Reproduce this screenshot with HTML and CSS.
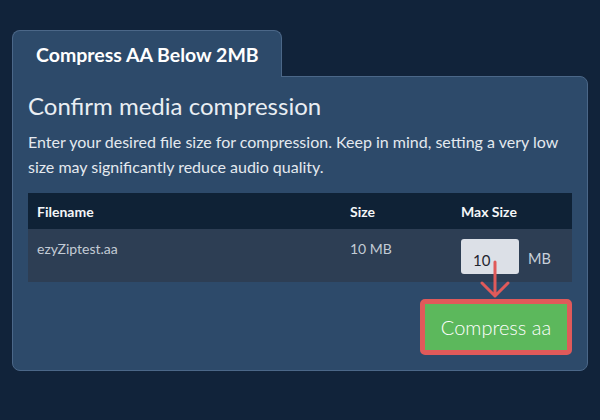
FILE: index.html
```html
<!DOCTYPE html>
<html lang="en">
<head>
<meta charset="utf-8">
<title>Compress AA Below 2MB</title>
<link rel="stylesheet" href="styles.css">
</head>
<body>
<div class="wrap">
  <div class="tab">Compress AA Below 2MB</div>
  <section class="panel">
    <h1 class="title">Confirm media compression</h1>
    <p class="desc">Enter your desired file size for compression. Keep in mind, setting a very low size may significantly reduce audio quality.</p>
    <table class="files">
      <thead>
        <tr>
          <th class="c-name">Filename</th>
          <th class="c-size">Size</th>
          <th class="c-max">Max Size</th>
        </tr>
      </thead>
      <tbody>
        <tr>
          <td>ezyZiptest.aa</td>
          <td>10 MB</td>
          <td><input class="max-input" type="text" value="10"><span class="unit">MB</span></td>
        </tr>
      </tbody>
    </table>
    <div class="actions">
      <svg class="arrow" width="50" height="40" viewBox="0 0 50 40" aria-hidden="true">
        <path d="M25 3 V37 M12 24 L25 37 L38 24" fill="none" stroke="#e05a5a" stroke-width="3" stroke-linecap="round" stroke-linejoin="round"/>
      </svg>
      <button class="btn" type="button">Compress aa</button>
    </div>
  </section>
</div>
</body>
</html>
```

FILE: styles.css
```css
html, body {
  margin: 0;
  padding: 0;
  background: #11233a;
  font-family: Lato, "Open Sans", sans-serif;
  color: #e8edf2;
}

.wrap {
  padding: 30px 12px 0 12px;
}

.tab {
  display: inline-block;
  box-sizing: border-box;
  width: 270px;
  height: 47px;
  padding: 0 0 0 23px;
  white-space: nowrap;
  overflow: hidden;
  line-height: 47px;
  font-size: 19.5px;
  font-weight: 700;
  color: #ffffff;
  background: #2d4a6a;
  border: 1px solid #4b6788;
  border-bottom: none;
  border-radius: 8px 8px 0 0;
  position: relative;
  z-index: 1;
  margin-bottom: -1px;
  vertical-align: top;
}

.panel {
  display: block;
  background: #2d4a6a;
  border: 1px solid #4b6788;
  border-radius: 0 8px 8px 8px;
  padding: 14px 15px 15px 15px;
}

.title {
  margin: 0;
  font-size: 24px;
  line-height: 30px;
  font-weight: 400;
  color: #e9eef3;
}

.desc {
  margin: 8px 0 0 0;
  font-size: 16px;
  line-height: 25px;
  color: #e4e9ef;
}

.files {
  margin-top: 14px;
  width: 544px;
  border-collapse: collapse;
  table-layout: fixed;
}

.files th {
  background: #0f2236;
  color: #f4f6f8;
  font-size: 14px;
  font-weight: 700;
  text-align: left;
  height: 36px;
  padding: 0 9px;
  box-sizing: border-box;
}

.c-name { width: 313px; }
.c-size { width: 111px; }

.files td {
  background: #2d3e54;
  color: #c3cbd5;
  font-size: 14px;
  line-height: 20px;
  vertical-align: top;
  padding: 10px 9px 8px 9px;
}

.max-input {
  box-sizing: border-box;
  width: 58px;
  height: 35px;
  border: none;
  border-radius: 3px;
  background: #dce0e7;
  color: #1e2530;
  font-family: Lato, sans-serif;
  font-size: 15px;
  padding: 6px 0 0 12px;
  margin: 0;
  vertical-align: middle;
}

.unit {
  margin-left: 9px;
  font-size: 14.5px;
  color: #c8d0da;
  vertical-align: middle;
  position: relative;
  top: 2px;
}

.actions {
  margin-top: 17px;
  display: flex;
  justify-content: flex-end;
  position: relative;
}

.arrow {
  position: absolute;
  top: -40px;
  right: 52px;
  z-index: 2;
}

.btn {
  box-sizing: border-box;
  width: 152px;
  height: 56px;
  background: #5cb85c;
  border: 5px solid #e05a5a;
  border-radius: 5px;
  color: #ffffff;
  font-family: Lato, sans-serif;
  font-size: 20px;
  font-weight: 300;
  padding: 0;
}
```
